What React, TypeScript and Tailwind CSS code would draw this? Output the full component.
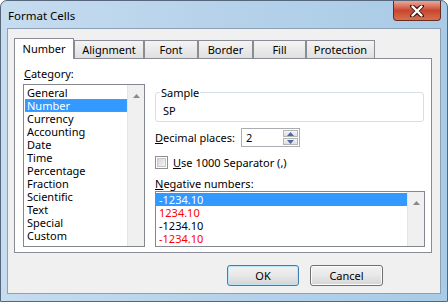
import React from "react";

const categories = [
  "General",
  "Number",
  "Currency",
  "Accounting",
  "Date",
  "Time",
  "Percentage",
  "Fraction",
  "Scientific",
  "Text",
  "Special",
  "Custom",
];

const negatives = [
  { t: "-1234.10", red: false },
  { t: "1234.10", red: true },
  { t: "-1234.10", red: false },
  { t: "-1234.10", red: true },
];

function UpArrow() {
  return (
    <svg width="7" height="4" viewBox="0 0 7 4" className="block">
      <path d="M0 4 L3.5 0 L7 4 Z" fill="#8a8a8a" />
    </svg>
  );
}

function ScrollBar() {
  return (
    <div className="w-[17px] h-full bg-[#f0f0f0] border-l border-[#e4e4e4] flex justify-center pt-[9px]">
      <UpArrow />
    </div>
  );
}

function Tab({ label, w, selected }: { label: string; w: number; selected?: boolean }) {
  if (selected) {
    return (
      <div
        className="relative z-10 -mb-px h-[21px] bg-white border border-b-0 border-[#898c95] flex items-center justify-center pb-[1px]"
        style={{ width: w }}
      >
        {label}
      </div>
    );
  }
  return (
    <div
      className="h-[18px] bg-gradient-to-b from-[#f4f4f4] to-[#e0e0e0] border border-b-0 border-[#898c95] flex items-center justify-center"
      style={{ width: w }}
    >
      {label}
    </div>
  );
}

export default function App() {
  return (
    <div className="w-[448px] h-[302px] overflow-hidden bg-white font-['Noto_Sans',sans-serif] text-[11px] leading-[13px] text-black">
      <div className="w-full h-full rounded-t-[7px] border border-[#56677c] bg-gradient-to-r from-[#c6dcef] via-[#b5d2ea] to-[#a9cbe6] flex flex-col">
        {/* Title bar */}
        <div className="h-[27px] flex items-start justify-between">
          <div className="pl-[7px] pt-[8px] text-[11.5px]">Format Cells</div>
          <div className="mr-[6px] w-[48px] h-[20px] rounded-b-[4px] border border-t-0 border-[#6b2a20] bg-gradient-to-b from-[#e8a897] via-[#c9452d] to-[#d6704f] flex items-center justify-center">
            <svg width="14" height="12" viewBox="0 0 14 12">
              <path
                d="M2 1 L7 5 L12 1 M2 11 L7 7 L12 11 M2 1 L12 11 M12 1 L2 11"
                stroke="#3a1a14"
                strokeWidth="4"
                strokeLinecap="round"
                fill="none"
              />
              <path
                d="M2.5 1.5 L11.5 10.5 M11.5 1.5 L2.5 10.5"
                stroke="#ffffff"
                strokeWidth="2.4"
                strokeLinecap="round"
                fill="none"
              />
            </svg>
          </div>
        </div>

        {/* Client area */}
        <div className="mx-[6px] h-[266px] border border-[#8ea0b4] bg-[#f0f0f0] flex flex-col pt-[9px] pl-[6px]">
          {/* Tabs */}
          <div className="h-[20px] flex items-end">
            <Tab label="Number" w={60} selected />
            <Tab label="Alignment" w={70} />
            <Tab label="Font" w={54} />
            <Tab label="Border" w={55} />
            <Tab label="Fill" w={53} />
            <Tab label="Protection" w={69} />
          </div>

          {/* Panel */}
          <div className="w-[418px] h-[195px] border border-[#898c95] bg-white flex">
            {/* Left column */}
            <div className="pl-[8px] pt-[8px] flex flex-col">
              <div className="ml-[1px]">
                <span className="underline">C</span>ategory:
              </div>
              <div className="mt-[4px] w-[122px] h-[163px] border border-[#828790] bg-white flex">
                <div className="w-[103px] pl-[1px] pt-[1px] flex flex-col">
                  {categories.map((c) => (
                    <div
                      key={c}
                      className={
                        c === "Number"
                          ? "h-[13px] w-[102px] bg-[#3399ff] text-white border border-dotted border-[#e07a30] pl-[1px] flex items-center"
                          : "h-[13px] w-[102px] pl-[2px] flex items-center"
                      }
                    >
                      {c}
                    </div>
                  ))}
                </div>
                <ScrollBar />
              </div>
            </div>

            {/* Right column */}
            <div className="ml-[10px] pt-[27px] w-[270px] flex flex-col">
              <fieldset className="w-[269px] h-[36px] border border-[#d5dfe5] rounded-[3px] p-0 m-0">
                <legend className="ml-[4px] px-[1px] leading-[13px]">Sample</legend>
                <div className="pl-[7px] mt-[5px]">SP</div>
              </fieldset>

              <div className="mt-[6px] flex items-center h-[19px]">
                <div className="w-[86px]">
                  <span className="underline">D</span>ecimal places:
                </div>
                <div className="w-[59px] h-[19px] border border-[#abadb3] bg-white flex items-center">
                  <div className="flex-1 pl-[4px]">2</div>
                  <div className="w-[16px] h-full flex flex-col gap-[1px] py-[1px] pr-[1px]">
                    <div className="flex-1 border border-[#b5b5b5] bg-gradient-to-b from-[#f6f6f6] to-[#dedede] flex items-center justify-center">
                      <svg width="7" height="4" viewBox="0 0 7 4">
                        <path d="M0 4 L3.5 0 L7 4 Z" fill="#4a6aa5" />
                      </svg>
                    </div>
                    <div className="flex-1 border border-[#b5b5b5] bg-gradient-to-b from-[#f6f6f6] to-[#dedede] flex items-center justify-center">
                      <svg width="7" height="4" viewBox="0 0 7 4">
                        <path d="M0 0 L3.5 4 L7 0 Z" fill="#4a6aa5" />
                      </svg>
                    </div>
                  </div>
                </div>
              </div>

              <div className="mt-[9px] h-[13px] flex items-center">
                <div className="w-[13px] h-[13px] border border-[#8e8f8f] bg-white p-[1px]">
                  <div className="w-full h-full bg-gradient-to-br from-[#d6d6d6] to-[#f4f4f4] border border-[#c8c8c8]" />
                </div>
                <div className="ml-[5px]">
                  <span className="underline">U</span>se 1000 Separator (,)
                </div>
              </div>

              <div className="mt-[8px]">
                <span className="underline">N</span>egative numbers:
              </div>
              <div className="mt-[1px] w-[270px] h-[56px] border border-[#828790] bg-white flex">
                <div className="w-[251px] pt-[1px] flex flex-col">
                  {negatives.map((n, i) => (
                    <div
                      key={i}
                      className={
                        i === 0
                          ? "h-[13px] bg-[#3399ff] text-white pl-[3px] flex items-center"
                          : n.red
                          ? "h-[13px] text-[#ff0000] pl-[3px] flex items-center"
                          : "h-[13px] pl-[3px] flex items-center"
                      }
                    >
                      {n.t}
                    </div>
                  ))}
                </div>
                <ScrollBar />
              </div>
            </div>
          </div>

          {/* Buttons */}
          <div className="mt-[12px] flex justify-end gap-[11px] pr-[57px]">
            <div className="w-[72px] h-[21px] rounded-[3px] border border-[#3c7fb1] bg-gradient-to-b from-[#f2f2f2] via-[#e8e8e8] to-[#d4d4d4] shadow-[inset_0_0_0_1px_#bde4f7] flex items-center justify-center">
              OK
            </div>
            <div className="w-[73px] h-[21px] rounded-[3px] border border-[#707070] bg-gradient-to-b from-[#f2f2f2] via-[#e8e8e8] to-[#d4d4d4] shadow-[inset_0_0_0_1px_#fcfcfc] flex items-center justify-center">
              Cancel
            </div>
          </div>
        </div>
      </div>
    </div>
  );
}
